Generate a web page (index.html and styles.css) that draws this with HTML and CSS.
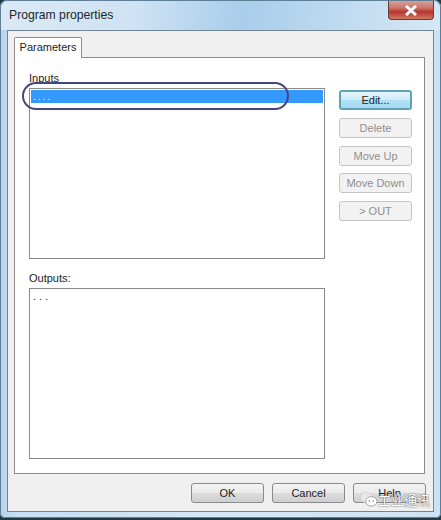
FILE: index.html
```html
<!DOCTYPE html>
<html lang="en">
<head>
  <meta charset="UTF-8">
  <title>Program properties</title>
  <link rel="stylesheet" href="styles.css">
</head>
<body>
  <div class="window">
    <div class="titlebar">
      <span class="title">Program properties</span>
      <div class="close">
        <svg width="14" height="11" viewBox="0 0 14 11"><path d="M2 1 L12 10 M12 1 L2 10" stroke="#fff" stroke-width="3" fill="none"/></svg>
      </div>
    </div>

    <div class="client">
      <div class="tabs">
        <div class="tab">Parameters</div>
      </div>

      <div class="page">
        <div class="lists">
          <div class="label">Inputs</div>
          <div class="list list-in">
            <div class="row selected">. . . .</div>
          </div>
          <div class="label label-out">Outputs:</div>
          <div class="list list-out">
            <div class="row">. . .</div>
          </div>
        </div>

        <div class="side">
          <button class="btn btn-default">Edit...</button>
          <button class="btn" disabled>Delete</button>
          <button class="btn" disabled>Move Up</button>
          <button class="btn" disabled>Move Down</button>
          <button class="btn" disabled>&gt; OUT</button>
        </div>
      </div>

      <div class="footer">
        <button class="btn btn-main">OK</button>
        <button class="btn btn-main">Cancel</button>
        <button class="btn btn-main">Help</button>
      </div>
    </div>
  </div>

  <!-- Annotation drawn over the first list -->
  <div class="mark"></div>

  <!-- Watermark -->
  <div class="watermark">
    <svg width="18" height="17" viewBox="0 0 19 17">
      <ellipse cx="7" cy="6.500" rx="6.500" ry="5.500" fill="#e8e8e8" stroke="#c4c4c4" stroke-width="0.500"/>
      <ellipse cx="12" cy="10.500" rx="6" ry="5" fill="#fff" stroke="#9a9a9a" stroke-width="1"/>
      <circle cx="10" cy="10" r="0.800" fill="#777"/>
      <circle cx="14" cy="10" r="0.800" fill="#777"/>
    </svg>
    <span>工业通讯</span>
  </div>
</body>
</html>
```

FILE: styles.css
```css
/* General Styles */
html, body {
  margin: 0;
  padding: 0;
}

body {
  width: 441px;
  height: 520px;
  position: relative;
  overflow: hidden;
  background: #1f3a44;
  font-family: 'Liberation Sans', Arial, sans-serif;
  font-size: 11px;
  color: #222;
}

.window {
  box-sizing: border-box;
  width: 441px;
  height: 518px;
  padding: 0 7px 6px 7px;
  display: flex;
  flex-direction: column;
  border-radius: 7px 7px 5px 5px;
  background: linear-gradient(90deg, #b9d3ea 0, #c6dff3 4%, #d5e8f7 50%, #cde3f5 100%);
  box-shadow: inset 0 0 0 1px #5e7f95;
}

/* Title bar */
.titlebar {
  height: 29px;
  flex: none;
  display: flex;
  justify-content: space-between;
  align-items: flex-start;
  background: linear-gradient(100deg, #dbe9f5 0, #cfe3f4 30%, #a9cdea 55%, #d6e8f6 100%);
  margin: 1px -6px 0;
  padding: 0 6px 0 8px;
  border-radius: 7px 7px 0 0;
}

.title {
  font-size: 12.200px;
  line-height: 29px;
  color: #20272c;
}

.close {
  width: 46px;
  height: 19px;
  box-sizing: border-box;
  display: flex;
  align-items: center;
  justify-content: center;
  border: 1px solid #6b3a3a;
  border-top: none;
  border-radius: 0 0 4px 4px;
  background: linear-gradient(180deg, #d8a097 0, #c9736a 40%, #b8332a 60%, #cf7a62 100%);
}

/* Dialog body */
.client {
  flex: 1;
  display: flex;
  flex-direction: column;
  background: #f0f0f0;
  border: 1px solid #6f8596;
  padding: 6px 8px 8px 6px;
}

.tabs {
  height: 20px;
  display: flex;
}

.tab {
  box-sizing: border-box;
  width: 68px;
  height: 21px;
  line-height: 19px;
  text-align: center;
  background: #fff;
  border: 1px solid #8c8c8c;
  border-bottom: none;
  border-radius: 2px 2px 0 0;
  position: relative;
  z-index: 1;
}

.page {
  box-sizing: border-box;
  height: 417px;
  display: flex;
  background: #fff;
  border: 1px solid #8c8c8c;
  padding: 14px 0 0 14px;
}

.lists {
  width: 296px;
}

.label {
  height: 16px;
  line-height: 12px;
}

.label-out {
  margin-top: 13px;
}

.list {
  box-sizing: border-box;
  border: 1px solid #8a8a8a;
  background: #fff;
  padding: 1px;
  height: 171px;
}

.row {
  height: 13px;
  line-height: 13px;
  padding-left: 2px;
  color: #333;
}

.selected {
  background: #3399ff;
  color: #cfe6ff;
  letter-spacing: -0.700px;
}

.side {
  width: 73px;
  margin-left: 14px;
  padding-top: 18px;
  display: flex;
  flex-direction: column;
  gap: 7.750px;
}

/* Buttons */
.btn {
  box-sizing: border-box;
  width: 73px;
  height: 20px;
  padding: 0;
  font-family: 'Liberation Sans', Arial, sans-serif;
  font-size: 11px;
  color: #222;
  border: 1px solid #8a8a8a;
  border-radius: 3px;
  background: linear-gradient(180deg, #f3f3f3 0, #ebebeb 48%, #dcdcdc 52%, #cfcfcf 100%);
}

.btn:disabled {
  color: #8f8f8f;
  border-color: #c4c4c4;
  background: #f2f2f2;
}

.btn-default {
  border: 2px solid #5fa3b4;
  background: linear-gradient(180deg, #e6f5fc 0, #cdecf9 48%, #b0e0f5 52%, #a4daf3 100%);
}

.footer {
  flex: 1;
  display: flex;
  justify-content: flex-end;
  align-items: flex-start;
  gap: 8px;
  padding: 9px 0 0 0;
  margin-right: -1px;
}

/* Oval drawn on the screenshot */
.mark {
  position: absolute;
  left: 22px;
  top: 82px;
  width: 263px;
  height: 24px;
  border: 2px solid #45457f;
  border-radius: 14px;
}

.watermark {
  position: absolute;
  left: 360px;
  top: 491px;
  display: flex;
  align-items: flex-end;
  font-family: 'Noto Sans CJK SC', sans-serif;
  font-size: 13px;
  line-height: 17px;
  color: #fff;
  text-shadow: 0 0 1px #666, 0 0 2px #666;
}
```
